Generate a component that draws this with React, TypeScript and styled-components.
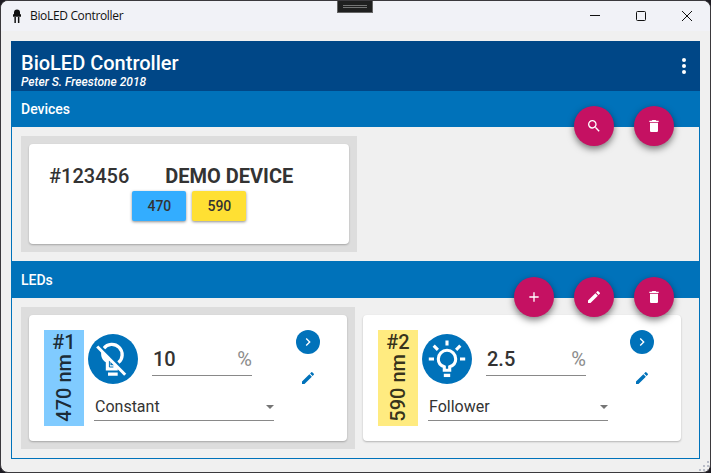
import React from 'react';
import styled, { createGlobalStyle } from 'styled-components';
import { MdSearch, MdDelete, MdAdd, MdEdit, MdChevronRight } from 'react-icons/md';

const GlobalStyle = createGlobalStyle`
  *, *::before, *::after { box-sizing: border-box; }
  body { margin: 0; background: #1d1b22; overflow: hidden; }
`;

const Desktop = styled.div`
  width: 711px;
  height: 473px;
  background: #1d1b22;
  overflow: hidden;
`;

const Window = styled.div`
  position: relative;
  width: 711px;
  height: 473px;
  border: 1px solid #3b393d;
  border-radius: 8px;
  background: #f0f0f0;
  color: #333;
  font-family: Roboto, sans-serif;
  overflow: hidden;
`;

const TitleBar = styled.div`
  display: flex;
  align-items: center;
  height: 30px;
  padding-left: 11px;
  background: #f1f2f7;
`;

const WindowTitle = styled.span`
  flex: 1;
  margin-left: 8px;
  color: #111;
  font: 12px/16px 'Open Sans', sans-serif;
  letter-spacing: -0.34px;
`;

const Caption = styled.div`
  display: grid;
  grid-template-columns: repeat(3, 46px);
  place-items: center;
`;

const DockHandle = styled.div`
  position: absolute;
  top: -1px;
  left: 336px;
  display: grid;
  align-content: center;
  justify-content: center;
  gap: 1px;
  width: 36px;
  height: 13px;
  border: 1px solid #666;
  background: #1f1f1f;
`;

const HandleLine = styled.i`
  width: 24px;
  height: 1px;
  background: #747474;
`;

const Frame = styled.div`
  display: flex;
  flex-direction: column;
  width: 689px;
  height: 419px;
  margin: 10px 0 0 10px;
`;

const Header = styled.header`
  display: flex;
  align-items: center;
  justify-content: space-between;
  height: 50px;
  padding: 0 14px 0 10px;
  background: #004787;
  color: #fff;
`;

const AppName = styled.h1`
  margin: 0;
  padding-top: 8px;
  font-size: 20px;
  font-weight: 500;
  line-height: 23px;
`;

const Author = styled.div`
  font-size: 12px;
  font-style: italic;
  font-weight: 500;
  line-height: 14px;
`;

const SectionBar = styled.div<{ $height: number }>`
  position: relative;
  display: flex;
  align-items: center;
  height: ${p => p.$height}px;
  padding-left: 10px;
  background: #0072ba;
  color: #fff;
  font-size: 14px;
  font-weight: 500;
`;

const Actions = styled.div<{ $top: number }>`
  position: absolute;
  z-index: 2;
  top: ${p => p.$top}px;
  right: 26px;
  display: flex;
  gap: 20px;
`;

const Fab = styled.button`
  display: grid;
  place-items: center;
  width: 40px;
  height: 40px;
  padding: 0;
  border: 0;
  border-radius: 50%;
  background: #c51162;
  color: #fff;
  box-shadow: 0 3px 7px rgba(0, 0, 0, 0.5);
`;

const SectionBody = styled.div<{ $height: number; $last?: boolean }>`
  display: flex;
  align-items: flex-start;
  height: ${p => p.$height}px;
  padding: 9px;
  border: solid #0072ba;
  border-width: 0 1px ${p => (p.$last ? 1 : 0)}px;
`;

const Selectable = styled.div<{ $selected?: boolean }>`
  padding: 8px;
  background: ${p => (p.$selected ? '#ddd' : 'transparent')};
`;

const Card = styled.div`
  border-radius: 4px;
  background: #fff;
  box-shadow: 0 1px 2px rgba(0, 0, 0, 0.26);
`;

const DeviceCard = styled(Card)`
  width: 320px;
  height: 100px;
  padding: 20px 20px 0;
`;

const DeviceHeading = styled.div`
  display: flex;
  gap: 36px;
  height: 27px;
  font-size: 20px;
  font-weight: 500;
  line-height: 24px;
`;

const DeviceName = styled.span`
  font-weight: 700;
`;

const Chips = styled.div`
  display: flex;
  gap: 6px;
  margin-left: 83.4px;
`;

const Chip = styled.button<{ $color: string }>`
  width: 54px;
  height: 30px;
  padding: 0;
  border: 0;
  border-radius: 2px;
  background: ${p => p.$color};
  color: #333;
  font: 500 14px Roboto, sans-serif;
  box-shadow: 0 1px 3px rgba(0, 0, 0, 0.45);
`;

const LedCard = styled(Card)`
  display: grid;
  grid-template-columns: 40px 180px 24px;
  column-gap: 10px;
  width: 318px;
  height: 126px;
  padding: 15px;
`;

const Tag = styled.div<{ $color: string }>`
  display: flex;
  flex-direction: column;
  align-items: center;
  height: 96px;
  background: ${p => p.$color};
  color: rgba(0, 0, 0, 0.8);
  font-size: 20px;
  font-weight: 500;
  line-height: 24px;
`;

const Wavelength = styled.span`
  writing-mode: vertical-rl;
  transform: rotate(180deg);
  line-height: 24px;
`;

const Controls = styled.div`
  display: flex;
  flex-direction: column;
`;

const LevelRow = styled.div`
  display: flex;
  gap: 14px;
  height: 58px;
  margin: 0 0 0 -6px;
  padding-top: 4px;
`;

const Level = styled.div`
  display: flex;
  justify-content: space-between;
  width: 100px;
  height: 42px;
  padding: 13px 0 0 1px;
  border-bottom: 1px solid #898989;
  font-size: 20px;
  font-weight: 500;
  line-height: 24px;
`;

const Unit = styled.span`
  color: #8b8b8b;
  font-weight: 400;
`;

const ModeSelect = styled.div`
  display: flex;
  align-items: center;
  justify-content: space-between;
  height: 33px;
  padding: 5px 0 0 1px;
  border-bottom: 1px solid #898989;
  font-size: 16px;
  line-height: 20px;
`;

const Arrow = styled.i`
  border: solid transparent;
  border-width: 4px 4px 0;
  border-top-color: #757575;
`;

const SideActions = styled.div`
  display: flex;
  flex-direction: column;
  align-items: center;
  gap: 16px;
  width: 24px;
  margin-left: 12px;
  color: #0072ba;
`;

const Next = styled.button`
  display: grid;
  place-items: center;
  width: 24px;
  height: 24px;
  padding: 0;
  border: 0;
  border-radius: 50%;
  background: #0072ba;
  color: #fff;
`;

const SizeGrip = styled.svg`
  position: absolute;
  right: 1px;
  bottom: 1px;
`;

const AppIcon = () => (
  <svg width="10" height="15" viewBox="0 0 10 15" fill="#111">
    <path d="M2 5.2V3.5a3 3 0 0 1 6 0v1.7h1v2.5H1V5.2zM2.4 8h1.5v6H2.4zM5.9 8h1.5v6H5.9z" />
  </svg>
);

const BulbOn = () => (
  <svg width="50" height="50" viewBox="0 0 50 50" fill="none" stroke="#fff" strokeWidth="3.1">
    <circle cx="25" cy="25" r="25" fill="#0072ba" stroke="none" />
    <path d="M22.3 36.2V32.8C18.6 31.6 16.3 28.7 16.3 25a8.7 8.7 0 0 1 17.4 0c0 3.7-2.3 6.6-6 7.8v3.4z" />
    <path d="M21.8 41.4h6.4" strokeWidth="3.3" />
    <path d="M25 6.5v5.1M6.8 25h5.2M38 25h5.2M11.7 11.7l4.2 4.2M38.3 11.7l-4.2 4.2" strokeWidth="3.1" />
  </svg>
);

const BulbOff = () => (
  <svg width="50" height="50" viewBox="0 0 50 50" fill="none" stroke="#fff" strokeWidth="3.3">
    <circle cx="25" cy="25" r="25" fill="#0072ba" stroke="none" />
    <path d="M15.7 14.4A10.3 10.3 0 1 1 30.2 28.8" />
    <path d="M13.2 18c-.5 5 1.4 8.2 4.6 10.3V36.6h12v-2.2l-3.3-3.1h-4.1v-5.6l-6.7-6.6z" fill="#fff" stroke="none" />
    <path d="M21.4 26.6v6.4h4" stroke="#0072ba" strokeWidth="1" />
    <path d="M20 40.1h9.7" strokeWidth="3.2" />
    <path d="M11 10.7l28 28" stroke="#0072ba" strokeWidth="2.2" />
    <path d="M9.2 12.5l28 28.2" strokeWidth="3" />
  </svg>
);

type Led = { id: string; wave: string; tag: string; level: string; mode: string; on: boolean };

const leds: Led[] = [
  { id: '#1', wave: '470 nm', tag: '#80cbff', level: '10', mode: 'Constant', on: false },
  { id: '#2', wave: '590 nm', tag: '#ffeb80', level: '2.5', mode: 'Follower', on: true },
];

const LedPanel = ({ led }: { led: Led }) => (
  <Selectable $selected={!led.on}>
    <LedCard>
      <Tag $color={led.tag}>
        <span>{led.id}</span>
        <Wavelength>{led.wave}</Wavelength>
      </Tag>
      <Controls>
        <LevelRow>
          {led.on ? <BulbOn /> : <BulbOff />}
          <Level>
            <span>{led.level}</span>
            <Unit>%</Unit>
          </Level>
        </LevelRow>
        <ModeSelect>
          <span>{led.mode}</span>
          <Arrow />
        </ModeSelect>
      </Controls>
      <SideActions>
        <Next aria-label="Next"><MdChevronRight size={16} /></Next>
        <MdEdit size={16} />
      </SideActions>
    </LedCard>
  </Selectable>
);

const gripDots = [[8, 0], [4, 4], [8, 4], [0, 8], [4, 8], [8, 8]];

export default function App() {
  return (
    <Desktop>
      <GlobalStyle />
      <Window>
        <TitleBar>
          <AppIcon />
          <WindowTitle>BioLED Controller</WindowTitle>
          <Caption>
            <svg width="10" height="10" stroke="#111"><path d="M0 4.5h10" /></svg>
            <svg width="10" height="10" fill="none" stroke="#111"><rect x=".5" y=".5" width="9" height="9" rx="1" /></svg>
            <svg width="10" height="10" stroke="#111"><path d="M0 0l10 10M10 0L0 10" /></svg>
          </Caption>
        </TitleBar>
        <DockHandle><HandleLine /><HandleLine /></DockHandle>
        <Frame>
          <Header>
            <div>
              <AppName>BioLED Controller</AppName>
              <Author>Peter S. Freestone 2018</Author>
            </div>
            <svg width="4" height="16" fill="#fff">
              <circle cx="2" cy="2" r="2" /><circle cx="2" cy="8" r="2" /><circle cx="2" cy="14" r="2" />
            </svg>
          </Header>
          <SectionBar $height={36}>
            Devices
            <Actions $top={15}>
              <Fab aria-label="Search"><MdSearch size={16} /></Fab>
              <Fab aria-label="Delete"><MdDelete size={16} /></Fab>
            </Actions>
          </SectionBar>
          <SectionBody $height={134}>
            <Selectable $selected>
              <DeviceCard>
                <DeviceHeading>
                  <span>#123456</span>
                  <DeviceName>DEMO DEVICE</DeviceName>
                </DeviceHeading>
                <Chips>
                  <Chip $color="#33adff">470</Chip>
                  <Chip $color="#ffe033">590</Chip>
                </Chips>
              </DeviceCard>
            </Selectable>
          </SectionBody>
          <SectionBar $height={37}>
            LEDs
            <Actions $top={16}>
              <Fab aria-label="Add"><MdAdd size={16} /></Fab>
              <Fab aria-label="Edit"><MdEdit size={16} /></Fab>
              <Fab aria-label="Delete"><MdDelete size={16} /></Fab>
            </Actions>
          </SectionBar>
          <SectionBody $height={161} $last>
            {leds.map(led => <LedPanel key={led.id} led={led} />)}
          </SectionBody>
        </Frame>
        <SizeGrip width="10" height="10" fill="#b8bcc8">
          {gripDots.map(([x, y]) => <rect key={`${x}-${y}`} x={x} y={y} width="2" height="2" />)}
        </SizeGrip>
      </Window>
    </Desktop>
  );
}
